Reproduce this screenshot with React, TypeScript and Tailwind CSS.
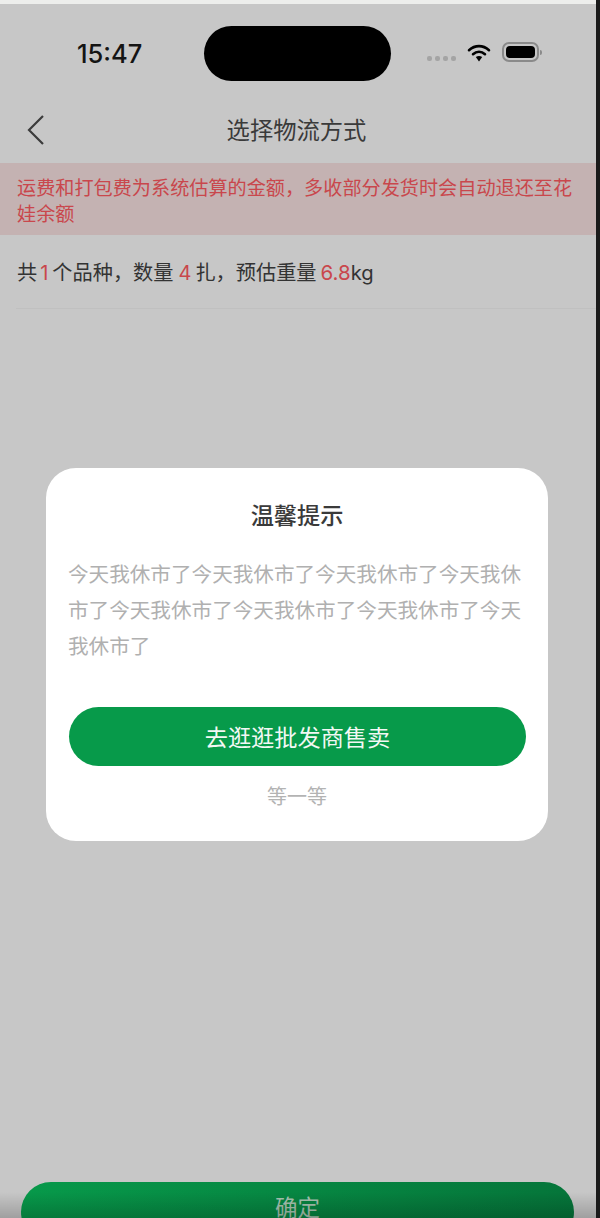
import React from "react";

const WifiIcon = () => (
  <svg width="24" height="20" viewBox="0 0 24 20" fill="none">
    <path d="M2 7.2C8 1.8 16 1.8 22 7.2" stroke="#000" strokeWidth="2.6" strokeLinecap="round" />
    <path d="M6 11.2C9.6 8 14.4 8 18 11.2" stroke="#000" strokeWidth="2.6" strokeLinecap="round" />
    <path d="M8.8 14L12 18.4L15.2 14C13.2 12.6 10.8 12.6 8.8 14Z" fill="#000" />
  </svg>
);

const BackIcon = () => (
  <svg width="20" height="32" viewBox="0 0 20 32" fill="none">
    <path d="M18 2L4 16L18 30" stroke="#3c3c3c" strokeWidth="2.2" />
  </svg>
);

const App: React.FC = () => {
  return (
    <div className="relative flex h-[1218px] w-[600px] overflow-hidden bg-[#1a1a1a] font-['Noto_Sans_CJK_SC','Noto_Sans',sans-serif]">
      <div className="relative flex w-[596px] flex-col bg-[#c7c7c7]">
        <div className="h-[4px] bg-[#edeeec]" />

        {/* Status bar */}
        <div className="flex h-[96px] items-center pt-[2px]">
          <span className="ml-[77px] mt-[1px] w-[127px] text-[25.5px] font-medium leading-none text-[#141414] font-['Inter',sans-serif]">15:47</span>
          <div className="h-[55px] w-[187px] rounded-[28px] bg-black" />
          <div className="ml-[36px] mt-[11px] flex gap-[3px]">
            <span className="h-[5px] w-[5px] rounded-[2px] bg-[#a4a4a4]" />
            <span className="h-[5px] w-[5px] rounded-[2px] bg-[#a4a4a4]" />
            <span className="h-[5px] w-[5px] rounded-[2px] bg-[#a4a4a4]" />
            <span className="h-[5px] w-[5px] rounded-[2px] bg-[#a4a4a4]" />
          </div>
          <div className="ml-[11px]">
            <WifiIcon />
          </div>
          <div className="mb-[2px] ml-[11px] flex items-center">
            <div className="rounded-[7px] border-[2px] border-[#8a8a8a] p-[2px]">
              <div className="h-[12px] w-[29px] rounded-[4px] bg-black" />
            </div>
            <div className="ml-[1px] h-[5px] w-[2px] rounded-r-[2px] bg-[#8a8a8a]" />
          </div>
        </div>

        {/* Nav */}
        <div className="flex h-[63px] items-center justify-between pb-[4px] pl-[25px]">
          <BackIcon />
          <span className="absolute left-0 w-[593px] text-center text-[23.3px] text-[#3a3a3a]">选择物流方式</span>
        </div>

        {/* Notice */}
        <div className="h-[72px] bg-[#c4b2b2] pl-[17px] pr-[15px] pt-[11px] text-[19.15px] leading-[26px] text-[#c9474c]">
          运费和打包费为系统估算的金额，多收部分发货时会自动退还至花娃余额
        </div>

        {/* Summary */}
        <div className="ml-[16px] flex h-[74px] items-center border-b border-[#c0c0c0] pt-[3px] text-[20.2px] text-[#333]">
          <span className="whitespace-nowrap pl-[1px]">
            共<span className="pl-[3px] pr-[4px] font-['Inter',sans-serif] text-[20px] text-[#c9474c]">1</span>个品种，数量
            <span className="pl-[5px] pr-[4px] font-['Inter',sans-serif] text-[20px] text-[#c9474c]">4</span>扎，预估重量
            <span className="pl-[4px] font-['Inter',sans-serif] text-[20.5px] text-[#c9474c]">6.8</span>
            <span className="font-['Inter',sans-serif]">kg</span>
          </span>
        </div>

        <div className="flex-1" />

        {/* Footer */}
        <div className="relative h-[36px] pl-[21px] pr-[22px]">
          <div className="relative h-[60px] rounded-[30px] bg-gradient-to-r from-[#07994a] to-[#05753a] pt-[8px] text-center text-[22.5px] leading-[32px] text-[#a9c4b2]">
            确定
          </div>
          <div className="absolute inset-x-0 bottom-0 h-[26px] bg-gradient-to-b from-transparent to-black/20" />
        </div>
      </div>

      {/* Dialog */}
      <div className="absolute left-[46px] top-[468px] h-[373px] w-[502px] rounded-[30px] bg-white px-[23px]">
        <h2 className="pt-[29px] text-center text-[23.2px] font-medium leading-[34px] text-[#3a3a3a]">温馨提示</h2>
        <p className="-ml-[1px] mt-[24px] w-[458px] text-[20.6px] leading-[36px] text-[#b0b0b0]">
          今天我休市了今天我休市了今天我休市了今天我休市了今天我休市了今天我休市了今天我休市了今天我休市了
        </p>
        <button className="mt-[44px] h-[59px] w-[457px] rounded-[30px] bg-[#079a4a] text-[23.2px] text-[#f2f8f4]">去逛逛批发商售卖</button>
        <div className="mt-[15px] text-center text-[20px] leading-[30px] text-[#b3b3b3]">等一等</div>
      </div>
    </div>
  );
};

export default App;
